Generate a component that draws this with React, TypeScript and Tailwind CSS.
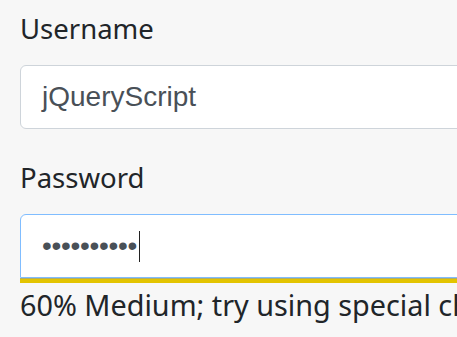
import React from 'react'

const App = () => {
  return (
    <div className="h-[337px] w-[457px] overflow-hidden bg-[#f7f7f7]">
      <form className="w-[640px] px-5 pt-2 font-['Noto_Sans',sans-serif] text-[#212529]">
        <div className="mb-[28px]">
          <label className="mb-[15px] block text-[27.5px] leading-[42px]">Username</label>
          <div className="flex h-[64px] w-[600px] items-center rounded-[6px] border border-[#ced4da] bg-white px-[21px] font-['Liberation_Sans',Arial,sans-serif] text-[28px] text-[#495057]">
            jQueryScript
          </div>
        </div>
        <div>
          <label className="mb-[15px] block text-[27.5px] leading-[42px]">Password</label>
          <div className="flex h-[64px] w-[600px] items-center rounded-t-[6px] border border-[#80bdff] bg-white px-[21px] font-['Liberation_Sans',Arial,sans-serif] text-[28px] text-[#495057]">
            <span className="tracking-[-0.3px]">••••••••••</span>
            <span className="ml-[2px] h-[31px] w-px bg-[#222]" />
          </div>
          <div className="h-[5px] w-[600px] border-t border-[#b0ad6a] bg-[#e3c400]" />
          <p className="whitespace-nowrap text-[28.8px] leading-[44px]">
            60% Medium; try using special characters
          </p>
        </div>
      </form>
    </div>
  )
}

export default App
